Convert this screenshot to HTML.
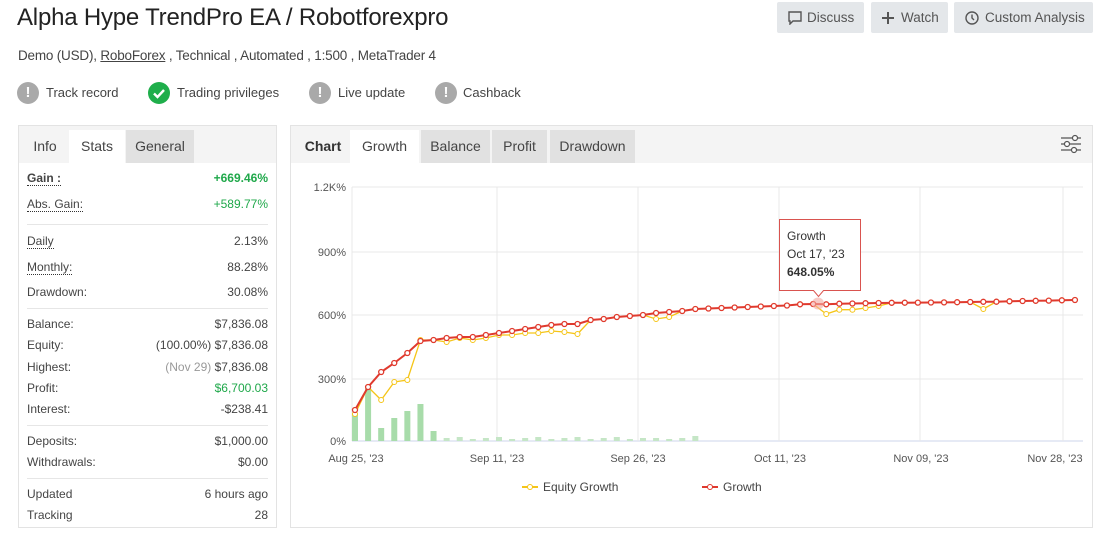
<!DOCTYPE html>
<html><head><meta charset="utf-8"><style>
*{box-sizing:border-box;margin:0;padding:0}
body{width:1114px;height:538px;background:#fff;font-family:"Liberation Sans",Arial,sans-serif;color:#333;position:relative;overflow:hidden}
.a{position:absolute;white-space:nowrap}
h1{position:absolute;left:17px;top:4px;font-size:24px;font-weight:normal;color:#222;letter-spacing:-0.2px}
.sub{left:18px;top:48px;font-size:13.5px;color:#444;letter-spacing:-0.2px}
.btn{position:absolute;top:2px;height:31px;background:#e4e7ea;border-radius:2px;font-size:13.5px;color:#555;line-height:31px;padding-left:10px}
.badge{position:absolute;top:81px;height:24px;font-size:13px;color:#444;line-height:24px}
.ic{position:absolute;left:0;top:1px;width:22px;height:22px;border-radius:50%;background:#a9a9a9;color:#fff;font-weight:bold;text-align:center;line-height:22px;font-size:15px}
.panel{position:absolute;top:125px;height:403px;border:1px solid #e3e3e3;background:#fff}
.hdr{position:absolute;left:0;top:0;right:0;height:37px;background:#f4f4f4}
.tab{position:absolute;top:4px;height:33px;line-height:33px;font-size:14px;color:#444;text-align:center}
.r{position:absolute;left:8px;width:241px;font-size:12px;color:#444}
.r span{position:absolute;right:0}
.sep{position:absolute;left:8px;width:241px;height:1px;background:#e6e6e6}
.dot{border-bottom:1px dotted #333}
.g{color:#1fa84a}
</style></head><body>
<h1>Alpha Hype TrendPro EA / Robotforexpro</h1>
<div class="a sub">Demo (USD), <u>RoboForex</u> , Technical , Automated , 1:500 , MetaTrader 4</div>
<div class="btn" style="left:777px;width:87px;padding-left:30px">Discuss<svg style="position:absolute;left:11px;top:9px" width="14" height="14" viewBox="0 0 14 14"><path d="M1 1h12v9H5l-3 3v-3H1z" fill="none" stroke="#555" stroke-width="1.4"/></svg></div>
<div class="btn" style="left:871px;width:77px;padding-left:30px">Watch<svg style="position:absolute;left:11px;top:10px" width="12" height="12"><path d="M6 0v12M0 6h12" stroke="#555" stroke-width="2"/></svg></div>
<div class="btn" style="left:954px;width:139px;padding-left:31px">Custom Analysis<svg style="position:absolute;left:11px;top:9px" width="14" height="14"><circle cx="7" cy="7" r="6" fill="none" stroke="#555" stroke-width="1.4"/><path d="M7 3.5V7l2 2" fill="none" stroke="#555" stroke-width="1.4"/></svg></div>

<div class="badge" style="left:17px;padding-left:29px"><div class="ic">!</div>Track record</div>
<div class="badge" style="left:148px;padding-left:29px"><div class="ic" style="background:#1fae4b"><svg width="22" height="22"><path d="M6 11.5l3.5 3.5 6.5-7" fill="none" stroke="#fff" stroke-width="2.4"/></svg></div>Trading privileges</div>
<div class="badge" style="left:309px;padding-left:29px"><div class="ic">!</div>Live update</div>
<div class="badge" style="left:435px;padding-left:28px"><div class="ic">!</div>Cashback</div>

<div class="panel" style="left:18px;width:259px">
<div class="hdr"></div>
<div class="tab" style="left:8px;width:36px">Info</div>
<div class="tab" style="left:50px;width:56px;background:#fff">Stats</div>
<div class="tab" style="left:107px;width:68px;background:#e1e1e1">General</div>
<div class="r" style="top:45px;font-weight:bold"><i class="dot" style="font-style:normal">Gain :</i><span class="g">+669.46%</span></div>
<div class="r" style="top:71px"><i class="dot" style="font-style:normal">Abs. Gain:</i><span class="g">+589.77%</span></div>
<div class="sep" style="top:98px"></div>
<div class="r" style="top:108px"><i class="dot" style="font-style:normal">Daily</i><span>2.13%</span></div>
<div class="r" style="top:134px"><i class="dot" style="font-style:normal">Monthly:</i><span>88.28%</span></div>
<div class="r" style="top:159px">Drawdown:<span>30.08%</span></div>
<div class="sep" style="top:182px"></div>
<div class="r" style="top:191px">Balance:<span>$7,836.08</span></div>
<div class="r" style="top:212px">Equity:<span>(100.00%) $7,836.08</span></div>
<div class="r" style="top:234px">Highest:<span><b style="font-weight:normal;color:#999">(Nov 29)</b> $7,836.08</span></div>
<div class="r" style="top:255px">Profit:<span class="g">$6,700.03</span></div>
<div class="r" style="top:276px">Interest:<span>-$238.41</span></div>
<div class="sep" style="top:299px"></div>
<div class="r" style="top:308px">Deposits:<span>$1,000.00</span></div>
<div class="r" style="top:329px">Withdrawals:<span>$0.00</span></div>
<div class="sep" style="top:352px"></div>
<div class="r" style="top:361px">Updated<span>6 hours ago</span></div>
<div class="r" style="top:382px">Tracking<span>28</span></div>
</div>

<div class="panel" style="left:290px;width:803px">
<div class="hdr"></div>
<div class="tab" style="left:6px;width:52px;font-weight:bold;color:#333">Chart</div>
<div class="tab" style="left:59px;width:69px;background:#fff">Growth</div>
<div class="tab" style="left:130px;width:69px;background:#e1e1e1">Balance</div>
<div class="tab" style="left:201px;width:55px;background:#e1e1e1">Profit</div>
<div class="tab" style="left:259px;width:85px;background:#e1e1e1">Drawdown</div>
<svg style="position:absolute;left:769px;top:8px" width="22" height="20"><g stroke="#555" stroke-width="1.2" fill="#fff"><path d="M1 4h20M1 10h20M1 16h20"/><circle cx="15" cy="4" r="2.5"/><circle cx="7" cy="10" r="2.5"/><circle cx="14" cy="16" r="2.5"/></g></svg>
</div>

<svg id="ch" class="a" style="left:0;top:0" width="1114" height="538" font-family="Liberation Sans, sans-serif" font-size="11" fill="#555"></svg>
<script>
var s='';
var G=[187,252,315,379,441],L=['1.2K%','900%','600%','300%','0%'];
for(var i=0;i<5;i++){s+='<line x1="352" x2="1083" y1="'+G[i]+'" y2="'+G[i]+'" stroke="'+(i==4?'#ccd6eb':'#e8e8e8')+'"/>';s+='<text x="346" y="'+(G[i]+4)+'" text-anchor="end">'+L[i]+'</text>';}
var V=[352,497,638,779,920,1063];for(i=0;i<V.length;i++)s+='<line x1="'+V[i]+'" x2="'+V[i]+'" y1="187" y2="441" stroke="#e8e8e8"/>';
var XL=[[356,"Aug 25, '23"],[497,"Sep 11, '23"],[638,"Sep 26, '23"],[780,"Oct 11, '23"],[921,"Nov 09, '23"],[1055,"Nov 28, '23"]];
XL.forEach(function(l){s+='<text x="'+l[0]+'" y="462" text-anchor="middle">'+l[1]+'</text>'});
var R=[410,387,372,363,353,341,340,338,337,337,335,333,331,329,327,325,324,324,320,319,317,316,315,313,312,311,309,308.5,308,307.5,307,306.5,306,305.5,305];
var rr=[304.3,304,304.3,303.7,303.5,303.2,303,302.8,302.7,302.6,302.5,302.4,302.2,302,301.8,301.7,301.3,301,300.8,300.6,300.3,300];
R=R.slice(0,34).concat(rr);
var Y=R.slice();
var ye={0:414,1:387,2:400,3:382,4:380,5:340,6:340,7:342,8:338,9:340,10:338,11:335,12:335,13:333,14:333,15:331,16:332,17:334,23:319,24:317,36:314,37:309.7,38:309.7,39:308,40:306,48:309};
for(var k in ye)Y[k]=ye[k];
var B={0:28,1:53,2:13,3:23,4:30,5:37,6:10,26:5,23:3,29:0};
var xs=function(i){return 355+i*13.09};
for(i=0;i<56;i++){var h=B[i]!==undefined?B[i]:(i>6&&i<27?2+(i%3):0);if(h)s+='<rect x="'+(xs(i)-3)+'" y="'+(441-h)+'" width="6" height="'+h+'" fill="'+(h>8?'#a8dcaa':'#c5e6c6')+'"/>';}
var p1='',p2='';for(i=0;i<56;i++){p1+=xs(i)+','+Y[i]+' ';p2+=xs(i)+','+R[i]+' ';}
s+='<polyline points="'+p1+'" fill="none" stroke="#f5c518" stroke-width="1.3"/>';
for(i=0;i<56;i++)s+='<circle cx="'+xs(i)+'" cy="'+Y[i]+'" r="2.5" fill="#fff" stroke="#f5c518"/>';
s+='<polyline points="'+p2+'" fill="none" stroke="#e03a2e" stroke-width="2"/>';
for(i=0;i<56;i++)s+='<circle cx="'+xs(i)+'" cy="'+R[i]+'" r="2.5" fill="#fff" stroke="#e03a2e" stroke-width="1.3"/>';
s+='<circle cx="818" cy="303.5" r="6" fill="#f4a6a0" opacity=".6"/>';
s+='<path d="M779.5 219.5h81v71h-37l-5 6-5-6h-34z" fill="#fff" stroke="#d9534f"/>';
s+='<text x="787" y="240" font-size="12" fill="#333">Growth</text><text x="787" y="258" font-size="12" fill="#333">Oct 17, \'23</text><text x="787" y="276" font-size="12" font-weight="bold" fill="#333">648.05%</text>';
s+='<line x1="522" x2="538" y1="487" y2="487" stroke="#f5c518" stroke-width="2"/><circle cx="530" cy="487" r="2.5" fill="#fff" stroke="#f5c518"/><text x="543" y="491" font-size="12" fill="#444">Equity Growth</text>';
s+='<line x1="702" x2="718" y1="487" y2="487" stroke="#e03a2e" stroke-width="2"/><circle cx="710" cy="487" r="2.5" fill="#fff" stroke="#e03a2e"/><text x="723" y="491" font-size="12" fill="#444">Growth</text>';
document.getElementById('ch').innerHTML=s;
</script>
</body></html>
